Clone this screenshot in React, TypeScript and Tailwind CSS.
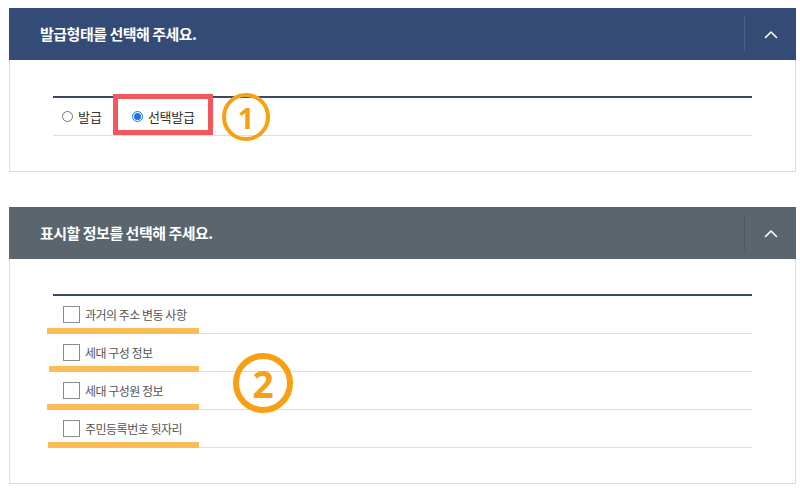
import React from "react";

const font = { fontFamily: '"Noto Sans CJK KR", "Noto Sans", sans-serif' };

function Chevron() {
  return (
    <svg width="14" height="9" viewBox="0 0 14 9" fill="none">
      <polyline points="1.5,7.5 7,2 12.5,7.5" stroke="#ffffff" strokeWidth="1.6" strokeLinecap="round" strokeLinejoin="round" />
    </svg>
  );
}

function Header({ title, bg, divider }: { title: string; bg: string; divider: string }) {
  return (
    <div className={`flex h-[52px] items-center ${bg}`}>
      <div className="flex-1 pl-[31px] text-[15px] font-bold tracking-[-0.5px] text-white">{title}</div>
      <div className={`flex h-[36px] w-[52px] items-center justify-center border-l ${divider}`}>
        <Chevron />
      </div>
    </div>
  );
}

function Radio({ checked }: { checked?: boolean }) {
  return checked ? (
    <span className="flex h-[11px] w-[11px] items-center justify-center rounded-full border border-[#1a73e8] bg-white">
      <span className="h-[7px] w-[7px] rounded-full bg-[#1a73e8]" />
    </span>
  ) : (
    <span className="h-[11px] w-[11px] rounded-full border border-[#767676] bg-white" />
  );
}

const items = [
  { label: "과거의 주소 변동 사항", bar: "left-[-6px] w-[152px]" },
  { label: "세대 구성 정보", bar: "left-[-4px] w-[150px]" },
  { label: "세대 구성원 정보", bar: "left-[-6px] w-[152px]" },
  { label: "주민등록번호 뒷자리", bar: "left-[-5px] w-[151px]" },
];

export default function App() {
  return (
    <div className="relative h-[491px] w-[800px] overflow-hidden bg-white pt-2" style={font}>
      {/* Panel 1 */}
      <div className="ml-[9px] w-[787px]">
        <Header title="발급형태를 선택해 주세요." bg="bg-[#344b76]" divider="border-[#4a5e88]" />
        <div className="border-x border-b border-[#dcdcdc] px-[43px] pb-[35px] pt-[36px]">
          <div className="border-t-2 border-[#3b4866]">
            <div className="relative flex h-[38px] items-center border-b border-[#dedede] pl-[9px] text-[13px] text-[#333]">
              <div className="flex items-center gap-[5px]">
                <Radio />
                <span>발급</span>
              </div>
              <div className="relative ml-[30px] flex items-center gap-[5px]">
                <Radio checked />
                <span className="tracking-[-0.3px]">선택발급</span>
                <div className="absolute left-[-19px] top-[-13px] h-[41px] w-[100px] border-[5px] border-[#f0585d]" />
              </div>
            </div>
          </div>
        </div>
      </div>

      {/* Panel 2 */}
      <div className="ml-[9px] mt-[35px] w-[787px]">
        <Header title="표시할 정보를 선택해 주세요." bg="bg-[#5a656e]" divider="border-[#4f5a66]" />
        <div className="border-x border-b border-[#dcdcdc] px-[43px] pb-[35px] pt-[35px]">
          <div className="border-t-2 border-[#3b4866]">
            {items.map((it) => (
              <div key={it.label} className="relative flex h-[38px] items-center border-b border-[#dedede] pl-[10px]">
                <span className="h-[17px] w-[17px] border border-[#8a8a8a] bg-white" />
                <span className="ml-[5px] text-[12px] tracking-[-0.5px] text-[#555]">{it.label}</span>
                <div className={`absolute bottom-[-1px] h-[6px] bg-[#fdbb57] ${it.bar}`} />
              </div>
            ))}
          </div>
        </div>
      </div>

      {/* Annotation circles */}
      <div className="absolute left-[222px] top-[93px] flex h-[48px] w-[48px] items-center justify-center rounded-full border-[4px] border-[#f7a014] bg-transparent">
        <span className="text-[29px] font-bold leading-none text-[#f7a014]" style={{ fontFamily: '"Noto Sans", sans-serif' }}>1</span>
      </div>
      <div className="absolute left-[233px] top-[353px] flex h-[60px] w-[60px] items-center justify-center rounded-full border-[6px] border-[#f7a014] bg-transparent">
        <span className="text-[37px] font-bold leading-none text-[#f7a014]" style={{ fontFamily: '"Noto Sans", sans-serif' }}>2</span>
      </div>
    </div>
  );
}
